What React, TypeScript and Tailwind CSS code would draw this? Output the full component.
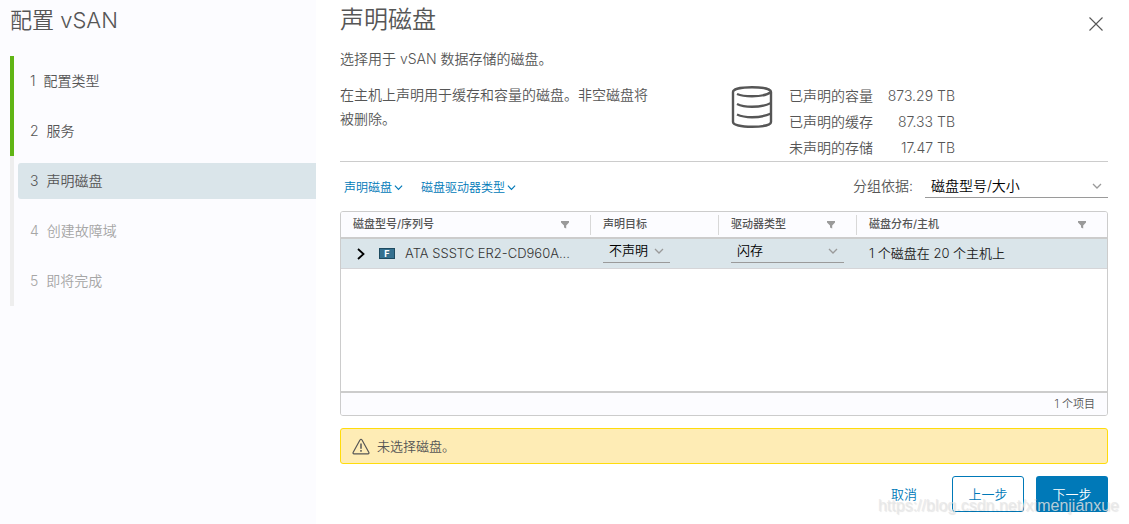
import React, { useState } from "react";
import clsx from "clsx";

type Step = {
    id: number;
    label: string;
    state: "done" | "current" | "todo";
};

const steps: Step[] = [
    { id: 1, label: "配置类型", state: "done" },
    { id: 2, label: "服务", state: "done" },
    { id: 3, label: "声明磁盘", state: "current" },
    { id: 4, label: "创建故障域", state: "todo" },
    { id: 5, label: "即将完成", state: "todo" },
];

const capacities = [
    { label: "已声明的容量", value: "873.29 TB" },
    { label: "已声明的缓存", value: "87.33 TB" },
    { label: "未声明的存储", value: "17.47 TB" },
];

const columns = [
    { label: "磁盘型号/序列号", filter: true, width: "w-[250px]" },
    { label: "声明目标", filter: false, width: "w-[128px]" },
    { label: "驱动器类型", filter: true, width: "w-[138px]" },
    { label: "磁盘分布/主机", filter: true, width: "" },
];

function Chevron({ className }: { className?: string }) {
    return (
        <svg viewBox="0 0 10 10" className={className} fill="none" stroke="currentColor" strokeWidth="1.3" aria-hidden="true">
            <path d="M1 3l4 4 4-4" />
        </svg>
    );
}

function FilterIcon() {
    return (
        <svg viewBox="0 0 10 10" className="size-[10px]" fill="currentColor" aria-hidden="true">
            <path d="M1 1h8v1.4L6.2 5.4V8.6L4 7.4V5.4L1 2.4z" />
        </svg>
    );
}

function DatabaseIcon() {
    return (
        <svg
            viewBox="0 0 42 44"
            className="h-11 w-[42px] shrink-0"
            fill="none"
            stroke="#565656"
            strokeWidth="2.4"
            aria-hidden="true"
        >
            <path d="M2 7C2 4 10 2.200 21 2.200S40 4 40 7V37C40 40 32 41.800 21 41.800S2 40 2 37Z" />
            <path d="M6 9C9 10.300 14 11.300 21 11.300S36 10.300 40 7" />
            <path d="M6 19C10 21 15 21.800 21 21.800S34 21 40 18" />
            <path d="M6 29.500C10 31.300 15 32.200 21 32.200S34 31.300 40 28.500" />
        </svg>
    );
}

type SelectProps = {
    label: string;
    options: string[];
    className: string;
};

function LineSelect({ label, options, className }: SelectProps) {
    const [value, setValue] = useState(options[0]);

    return (
        <div className={clsx("relative h-6 border-b border-[#9a9a9a] text-black", className)}>
            <select
                aria-label={label}
                value={value}
                onChange={(e) => setValue(e.target.value)}
                className="block size-full appearance-none bg-transparent px-1.5 outline-none"
            >
                {options.map((option) => (
                    <option key={option}>{option}</option>
                ))}
            </select>
            <Chevron className="pointer-events-none absolute top-1/2 right-1.5 size-[10px] -translate-y-1/2 text-[#9a9a9a]" />
        </div>
    );
}

function Sidebar() {
    return (
        <aside className="w-[316px] shrink-0 bg-[#fcfcff] pt-2 pl-2.5">
            <h1 className="text-[22px] leading-6">配置 vSAN</h1>
            <ol className="mt-6">
                {steps.map((step) => (
                    <li
                        key={step.id}
                        className={clsx(
                            "flex h-[50px] items-center border-l-4 pl-1",
                            step.state === "done" ? "border-[#60b515]" : "border-[#eeeeee]"
                        )}
                    >
                        <button
                            type="button"
                            disabled={step.state === "todo"}
                            aria-current={step.state === "current" ? "step" : undefined}
                            className={clsx(
                                "flex h-9 w-full items-center gap-2 rounded-l-[3px] pl-3 text-left",
                                step.state === "current" && "bg-[#dae5ea]",
                                step.state === "todo" && "text-[#a6a6a6]"
                            )}
                        >
                            <span>{step.id}</span>
                            <span>{step.label}</span>
                        </button>
                    </li>
                ))}
            </ol>
        </aside>
    );
}

function DiskGrid() {
    return (
        <div className="mt-[13px] flex min-h-[205px] flex-1 flex-col overflow-hidden rounded-[3px] border border-[#cccccc]">
            <table className="w-full table-fixed border-collapse text-[13px]">
                <thead>
                    <tr className="h-[26px] border-b-2 border-[#cccccc] bg-[#fcfcff] text-[11px]">
                        {columns.map((col, index) => (
                            <th key={col.label} className={clsx("p-0 text-left font-medium", col.width)}>
                                <div
                                    className={clsx(
                                        "flex h-5 items-center justify-between pt-px pr-5 pl-3",
                                        index < columns.length - 1 && "border-r border-[#d8d8d8]"
                                    )}
                                >
                                    <span>{col.label}</span>
                                    {col.filter && (
                                        <button type="button" aria-label={`筛选 ${col.label}`} className="text-[#9a9a9a]">
                                            <FilterIcon />
                                        </button>
                                    )}
                                </div>
                            </th>
                        ))}
                    </tr>
                </thead>
                <tbody>
                    <tr className="h-[30px] border-b border-[#d5d5d8] bg-[#dae5ea]">
                        <td className="p-0">
                            <div className="flex items-center pt-px pl-[15px]">
                                <button type="button" aria-label="展开">
                                    <svg viewBox="0 0 10 12" className="h-3 w-[10px]" fill="none" stroke="#000" strokeWidth="1.8">
                                        <path d="M2 1l5.500 5L2 11" />
                                    </svg>
                                </button>
                                <span className="ml-[13px] flex h-[11px] w-4 items-center justify-center border border-[#1d4a60] bg-[#34708f] text-[9px] leading-none font-bold text-white">
                                    F
                                </span>
                                <span className="ml-2.5 whitespace-nowrap text-[#333333]">ATA SSSTC ER2-CD960A...</span>
                            </div>
                        </td>
                        <td className="p-0 pl-3 align-top">
                            <LineSelect label="声明目标" options={["不声明", "缓存层", "容量层"]} className="w-[67px]" />
                        </td>
                        <td className="p-0 pl-3 align-top">
                            <LineSelect label="驱动器类型" options={["闪存", "HDD"]} className="w-[113px]" />
                        </td>
                        <td className="p-0 pt-px pl-3 text-[#222222]">1 个磁盘在 20 个主机上</td>
                    </tr>
                </tbody>
            </table>
            <div className="mt-auto flex h-6 items-center justify-end border-t-2 border-[#cccccc] bg-[#fcfcff] pt-0.5 pr-3 text-[11px]">
                1 个项目
            </div>
        </div>
    );
}

export default function App() {
    return (
        <div className="relative flex min-h-screen bg-white font-['Inter','Noto_Sans_CJK_SC',sans-serif] text-sm font-[350] text-[#565656]">
            <Sidebar />
            <main className="flex min-w-0 flex-1 flex-col pr-[21px] pb-3 pl-6">
                <header className="flex h-9 justify-between pt-2">
                    <h2 className="text-2xl leading-6">声明磁盘</h2>
                    <button type="button" aria-label="关闭" className="flex size-6 items-center justify-center self-end">
                        <svg viewBox="0 0 14 14" className="size-[14px]" fill="none" stroke="#565656" strokeWidth="1.1">
                            <path d="M.5.5l13 13M13.500.5l-13 13" />
                        </svg>
                    </button>
                </header>

                <p className="mt-[11px] leading-6">选择用于 vSAN 数据存储的磁盘。</p>

                <section className="mt-3 flex border-b border-[#cccccc]">
                    <p className="w-[310px] leading-6">在主机上声明用于缓存和容量的磁盘。非空磁盘将被删除。</p>
                    <div className="ml-[81px] flex gap-4">
                        <div className="pt-0.5">
                            <DatabaseIcon />
                        </div>
                        <dl>
                            {capacities.map((item) => (
                                <div key={item.label} className="flex w-[166px] justify-between leading-[26px]">
                                    <dt>{item.label}</dt>
                                    <dd>{item.value}</dd>
                                </div>
                            ))}
                        </dl>
                    </div>
                </section>

                <div className="mt-3 flex h-6 items-center justify-between">
                    <div className="flex gap-[18px] pt-[3px] pl-1 text-xs text-[#0079b8]">
                        <button type="button" className="flex items-center gap-0.5">
                            声明磁盘
                            <Chevron className="size-[9px]" />
                        </button>
                        <button type="button" className="flex items-center gap-0.5">
                            磁盘驱动器类型
                            <Chevron className="size-[9px]" />
                        </button>
                    </div>
                    <div className="flex items-center gap-3">
                        <span>分组依据:</span>
                        <LineSelect label="分组依据" options={["磁盘型号/大小", "主机"]} className="w-[183px]" />
                    </div>
                </div>

                <DiskGrid />

                <div
                    role="alert"
                    className="mt-3 flex h-9 items-center gap-[7px] rounded-[3px] border border-[#ffdc0b] bg-[#feecb5] pl-[11px] text-[13px]"
                >
                    <svg viewBox="0 0 18 17" className="h-[17px] w-[18px]" fill="none" stroke="#565656" strokeWidth="1.2" aria-hidden="true">
                        <path d="M8.100 1.800a1 1 0 0 1 1.800 0l7 12.700a.9.9 0 0 1-.8 1.300H1.900a.9.9 0 0 1-.8-1.300z" />
                        <path d="M9 5.500v5.200M9 12v1.700" strokeWidth="1.500" />
                    </svg>
                    <span>未选择磁盘。</span>
                </div>

                <footer className="mt-3 flex justify-end gap-3 text-[13px]">
                    <button type="button" className="h-9 w-[72px] text-[#0079b8]">
                        取消
                    </button>
                    <button type="button" className="h-9 w-[72px] rounded-[3px] border border-[#0079b8] text-[#0079b8]">
                        上一步
                    </button>
                    <button type="button" className="h-9 w-[72px] rounded-[3px] bg-[#0079b8] text-white">
                        下一步
                    </button>
                </footer>
            </main>
            <span className="pointer-events-none absolute right-2.5 bottom-2 font-['Liberation_Sans',sans-serif] text-base leading-5 font-normal text-[#e6e6e6]/80 [text-shadow:1px_1px_1px_rgba(0,0,0,0.1)]">
                https://blog.csdn.net/ximenjianxue
            </span>
        </div>
    );
}
